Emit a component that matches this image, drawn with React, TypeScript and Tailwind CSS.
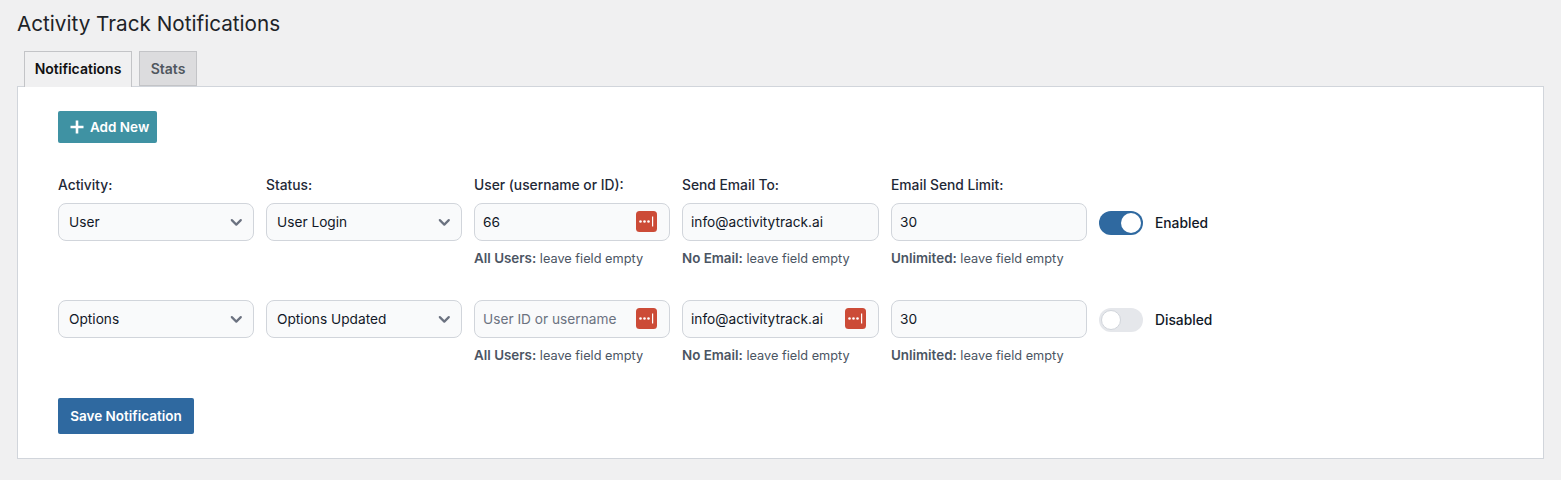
import React from "react";

function Chevron() {
  return (
    <svg className="absolute right-[6px] top-[8px]" width="20" height="20" viewBox="0 0 20 20" fill="none">
      <path d="M4.8 8.1 L9.3 12.6 L13.8 8.1" stroke="#6b7280" strokeWidth="2.2" strokeLinecap="round" strokeLinejoin="round" />
    </svg>
  );
}

function Select({ value }: { value: string }) {
  return (
    <div className="relative h-[38px] w-full rounded-[8px] border border-[#d1d5db] bg-[#f9fafb] pl-[10px] text-[13.7px] leading-[36px] text-[#111827]">
      {value}
      <Chevron />
    </div>
  );
}

function KeyIcon() {
  return (
    <svg className="absolute right-[13px] top-[8px]" width="21" height="21" viewBox="0 0 21 21">
      <rect width="21" height="21" rx="3.5" fill="#cc4b37" />
      <circle cx="4.5" cy="10.5" r="1.3" fill="#fff" />
      <circle cx="8.5" cy="10.5" r="1.3" fill="#fff" />
      <circle cx="12.5" cy="10.5" r="1.3" fill="#fff" />
      <rect x="16" y="5.5" width="1.2" height="10" fill="#fff" />
    </svg>
  );
}

function Field({
  value,
  placeholder,
  icon,
  strong,
}: {
  value?: string;
  placeholder?: string;
  icon?: boolean;
  strong: string;
}) {
  return (
    <div>
      <div className="relative">
        <input
          readOnly
          value={value ?? ""}
          placeholder={placeholder}
          className="block h-[38px] w-full rounded-[8px] border border-[#d1d5db] bg-[#f9fafb] pl-[8px] text-[13.7px] text-[#111827] outline-none placeholder:text-[#6b7280]"
        />
        {icon && <KeyIcon />}
      </div>
      <p className="mt-[8px] h-[18px] text-[12.75px] leading-[18px] text-[#4b5563]">
        <span className="text-[13.4px] font-semibold">{strong}</span> leave field empty
      </p>
    </div>
  );
}

function Toggle({ on }: { on: boolean }) {
  return (
    <div className="flex h-[40px] items-center gap-[12px]">
      <div
        className={
          on
            ? "flex h-[24px] w-[44px] items-center justify-end rounded-full bg-[#2f69a0] pr-[2px]"
            : "flex h-[24px] w-[44px] items-center justify-start rounded-full bg-[#e5e7eb] pl-[2px]"
        }
      >
        <div className={on ? "h-[20px] w-[20px] rounded-full bg-white" : "h-[20px] w-[20px] rounded-full border border-[#d1d5db] bg-white"} />
      </div>
      <span className="text-[13.8px] font-medium text-[#111827]">{on ? "Enabled" : "Disabled"}</span>
    </div>
  );
}

const labels = ["Activity:", "Status:", "User (username or ID):", "Send Email To:", "Email Send Limit:"];

export default function App() {
  return (
    <div className="h-[480px] overflow-hidden bg-[#f0f0f1] px-[17px] text-[#1d2327] [font-family:Inter,sans-serif]">
      <h1 className="pt-[10px] text-[20.7px] leading-[28px] font-normal text-[#1d2327]">Activity Track Notifications</h1>
      <div className="relative z-10 mt-[13px] flex gap-[7px] pl-[7px]">
        <div className="flex h-[36px] w-[108px] items-center justify-center border border-b-0 border-[#c3c4c7] bg-[#f0f0f1] pb-[2px] text-[14px] font-semibold text-[#111]">
          Notifications
        </div>
        <div className="flex h-[35px] w-[58px] items-center justify-center border border-[#c3c4c7] bg-[#dcdcde] text-[14px] font-semibold text-[#50575e]">
          Stats
        </div>
      </div>
      <div className="-mt-px h-[373px] w-[1527px] border border-[#d1d5db] bg-white pt-[24px] pl-[40px]">
        <button className="flex h-[32px] w-[99px] items-center gap-[6px] rounded-[2px] bg-[#3f92a3] pl-[12px] text-[13.5px] leading-[34px] font-semibold text-white">
          <svg width="14" height="14" viewBox="0 0 14 14" fill="none">
            <path d="M7 0.5V13.5M0.5 7H13.5" stroke="#fff" strokeWidth="2.6" />
          </svg>
          Add New
        </button>
        <div className="mt-[32px] grid grid-cols-[196px_196px_196px_197px_196px_auto] justify-start gap-x-[12px]">
          {labels.map((l) => (
            <label key={l} className="mb-[8px] text-[13.8px] leading-[20px] font-medium text-[#1f2937]">
              {l}
            </label>
          ))}
          <div />
          <Select value="User" />
          <Select value="User Login" />
          <Field value="66" icon strong="All Users:" />
          <Field value="info@activitytrack.ai" strong="No Email:" />
          <Field value="30" strong="Unlimited:" />
          <Toggle on />
        </div>
        <div className="mt-[33px] grid grid-cols-[196px_196px_196px_197px_196px_auto] justify-start gap-x-[12px]">
          <Select value="Options" />
          <Select value="Options Updated" />
          <Field placeholder="User ID or username" icon strong="All Users:" />
          <Field value="info@activitytrack.ai" icon strong="No Email:" />
          <Field value="30" strong="Unlimited:" />
          <Toggle on={false} />
        </div>
        <button className="mt-[34px] h-[36px] w-[136px] rounded-[2px] bg-[#2f69a0] text-[13.5px] font-semibold text-white">
          Save Notification
        </button>
      </div>
    </div>
  );
}
